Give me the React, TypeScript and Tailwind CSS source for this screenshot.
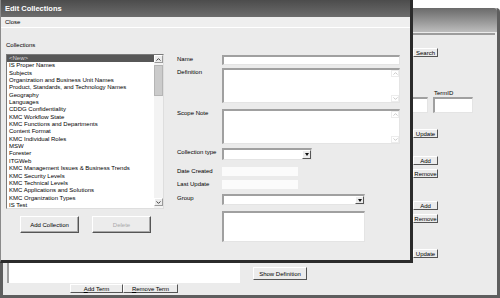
import type { ReactNode } from 'react';

const COLLECTIONS = [
  '<New>',
  'IS Proper Names',
  'Subjects',
  'Organization and Business Unit Names',
  'Product, Standards, and Technology Names',
  'Geography',
  'Languages',
  'CDDG Confidentiality',
  'KMC Workflow State',
  'KMC Functions and Departments',
  'Content Format',
  'KMC Individual Roles',
  'MSW',
  'Forester',
  'ITGWeb',
  'KMC Management Issues & Business Trends',
  'KMC Security Levels',
  'KMC Technical Levels',
  'KMC Applications and Solutions',
  'KMC Organization Types',
  'IS Test',
];

function Chevron({ up = false, color }: { up?: boolean; color: string }) {
  return (
    <svg width="5" height="3" viewBox="0 0 5 3">
      <path
        d={up ? 'M0.5 2.6 L2.5 0.6 L4.5 2.6' : 'M0.5 0.4 L2.5 2.4 L4.5 0.4'}
        fill="none"
        stroke={color}
        strokeWidth="1"
      />
    </svg>
  );
}

function Button({ children, className = '', disabled = false }: { children: ReactNode; className?: string; disabled?: boolean }) {
  return (
    <div
      className={`flex items-center justify-center border border-t-white border-l-white border-r-[#555] border-b-[#555] bg-[#ececec] text-[6px] leading-none ${
        disabled ? 'text-[#a9a9a9]' : 'text-black'
      } ${className}`}
    >
      {children}
    </div>
  );
}

// sunken white box, like an XP classic edit control
function Field({ className = '', children }: { className?: string; children?: ReactNode }) {
  return (
    <div
      className={`flex border-t-2 border-l-2 border-r border-b border-t-[#a0a0a0] border-l-[#a0a0a0] border-r-[#e4e4e4] border-b-[#e4e4e4] bg-white ${className}`}
    >
      {children}
    </div>
  );
}

function FaintScroll() {
  return (
    <div className="ml-auto flex h-full w-[8px] flex-col justify-between">
      <div className="flex h-[7px] items-center justify-center border border-[#ececec]">
        <Chevron up color="#c9c9c9" />
      </div>
      <div className="flex h-[7px] items-center justify-center border border-[#ececec]">
        <Chevron color="#c9c9c9" />
      </div>
    </div>
  );
}

function Select({ className = '' }: { className?: string }) {
  return (
    <Field className={className}>
      <div className="ml-auto flex h-full w-[9px] items-center justify-center border border-t-white border-l-white border-r-[#555] border-b-[#555] bg-[#ececec]">
        <svg width="4" height="3" viewBox="0 0 4 3">
          <path d="M0 0 L4 0 L2 3 Z" fill="#111" />
        </svg>
      </div>
    </Field>
  );
}

function Row({ label, mt, children }: { label: string; mt: string; children: ReactNode }) {
  return (
    <div className={`flex items-start ${mt}`}>
      <div className="w-[45px] text-[6px] leading-[8px] text-black">{label}</div>
      {children}
    </div>
  );
}

function BackWindow() {
  return (
    <div className="absolute left-0 top-[8px] flex h-[290px] w-[500px] flex-col rounded-tr-[4px] border-x-[3px] border-b-[3px] border-[#5e5e5e] bg-[#ebebeb]">
      <div className="h-[24px] rounded-tr-[3px] bg-gradient-to-b from-[#6a6a6a] to-[#bdbdbd]" />
      <div className="flex flex-col">
        <div className="mr-[2px] mt-[1px] h-[2px] bg-[#9c9c9c]" />

        {/* right hand column of the term editor */}
        <div className="flex flex-col text-black">
          <Button className="ml-[410px] mt-[13px] h-[9px] w-[25px]">Search</Button>
          <div className="ml-[392px] mt-[32px] flex items-end gap-[5px]">
            <Field className="h-[16px] w-[33px]" />
            <div className="flex flex-col">
              <div className="h-[8px] pl-[1px] text-[6px] leading-[8px]">TermID</div>
              <Field className="h-[16px] w-[40px]" />
            </div>
          </div>
          <Button className="ml-[410px] mt-[16px] h-[9px] w-[25px]">Update</Button>
          <Button className="ml-[410px] mt-[18px] h-[9px] w-[25px]">Add</Button>
          <Button className="ml-[410px] mt-[4px] h-[9px] w-[25px]">Remove</Button>
          <Button className="ml-[410px] mt-[23px] h-[9px] w-[25px]">Add</Button>
          <Button className="ml-[410px] mt-[4px] h-[9px] w-[25px]">Remove</Button>
          <Button className="ml-[410px] mt-[26px] h-[9px] w-[25px]">Update</Button>
        </div>

        {/* bottom strip below the dialog */}
        <div className="mt-[5px] flex items-start">
          <div className="ml-[4px] flex w-[233px] flex-col">
            <div className="h-[20px] border-l-2 border-[#a0a0a0] bg-white" />
            <div className="ml-[63px] mt-[1px] flex">
              <Button className="h-[9px] w-[53px]">
                <span className="underline">A</span>dd Term
              </Button>
              <Button className="h-[9px] w-[55px]">
                <span className="underline">R</span>emove Term
              </Button>
            </div>
          </div>
          <Button className="ml-[13px] mt-[4px] h-[13px] w-[54px]">Show Definition</Button>
        </div>
      </div>
    </div>
  );
}

function EditCollections() {
  return (
    <div className="absolute left-0 top-0 flex h-[263px] w-[413px] flex-col border-b-[3px] border-l border-r-[3px] border-[#2b2b2b] border-l-[#8a8a8a] bg-[#ebebeb] text-black">
      <div className="flex h-[17px] items-center bg-gradient-to-b from-[#4c4c4c] to-[#6d6d6d] pl-[4px] text-[7.5px] font-bold text-white">
        Edit Collections
      </div>
      <div className="flex h-[11px] items-center border-b border-white bg-[#efefef] pl-[4px] text-[6px]">Close</div>

      <div className="flex flex-col pl-[5px] pt-[13px]">
        <div className="h-[8px] text-[6px] leading-[8px]">Collections</div>
        <div className="mt-[5px] flex">
          {/* list of collections */}
          <div className="flex w-[158px] flex-col">
            <div className="flex h-[155px] border border-t-[#7a7a7a] border-l-[#7a7a7a] border-r-[#dedede] border-b-[#dedede] bg-white">
              <div className="flex-1 overflow-hidden text-[6px] leading-[7.35px] text-black">
                {COLLECTIONS.map((c, i) => (
                  <div key={c} className={i === 0 ? 'bg-[#575757] pl-[2px] text-[#d6d6d6]' : 'pl-[2px]'}>
                    {c}
                  </div>
                ))}
              </div>
              <div className="flex w-[9px] flex-col bg-[#f3f3f3]">
                <div className="flex h-[8px] items-center justify-center border border-t-white border-l-white border-r-[#9a9a9a] border-b-[#9a9a9a] bg-[#ececec]">
                  <Chevron up color="#444" />
                </div>
                <div className="mt-[2px] h-[31px] border border-[#b5b5b5] bg-[#cbcbcb]" />
                <div className="flex-1" />
                <div className="mb-[2px] flex h-[8px] items-center justify-center border border-t-white border-l-white border-r-[#9a9a9a] border-b-[#9a9a9a] bg-[#ececec]">
                  <Chevron color="#444" />
                </div>
              </div>
            </div>
            <div className="mt-[7px] flex">
              <Button className="ml-[14px] h-[17px] w-[59px] shadow-[inset_-1px_-1px_0_#a8a8a8]">Add Collection</Button>
              <Button disabled className="ml-[13px] h-[17px] w-[59px] shadow-[inset_-1px_-1px_0_#a8a8a8]">
                Delete
              </Button>
            </div>
          </div>

          {/* collection details */}
          <div className="ml-[13px] flex flex-col pt-[1px]">
            <Row label="Name" mt="mt-0">
              <Field className="h-[10px] w-[178px]" />
            </Row>
            <Row label="Definition" mt="mt-[3px]">
              <Field className="h-[35px] w-[178px]">
                <FaintScroll />
              </Field>
            </Row>
            <Row label="Scope Note" mt="mt-[6px]">
              <Field className="h-[35px] w-[178px]">
                <FaintScroll />
              </Field>
            </Row>
            <Row label="Collection type" mt="mt-[4px]">
              <Select className="h-[12px] w-[90px]" />
            </Row>
            <Row label="Date Created" mt="mt-[7px]">
              <div className="h-[9px] w-[76px] bg-[#fbfbfb]" />
            </Row>
            <Row label="Last Update" mt="mt-[4px]">
              <div className="h-[9px] w-[76px] bg-[#fbfbfb]" />
            </Row>
            <Row label="Group" mt="mt-[5px]">
              <Select className="h-[11px] w-[143px]" />
            </Row>
            <div className="ml-[45px] mt-[6px]">
              <Field className="h-[31px] w-[143px]" />
            </div>
          </div>
        </div>
      </div>
    </div>
  );
}

export default function App() {
  return (
    <div className="relative h-[298px] w-[500px] overflow-hidden bg-white font-['Liberation_Sans',Arial,sans-serif]">
      <BackWindow />
      <EditCollections />
    </div>
  );
}
